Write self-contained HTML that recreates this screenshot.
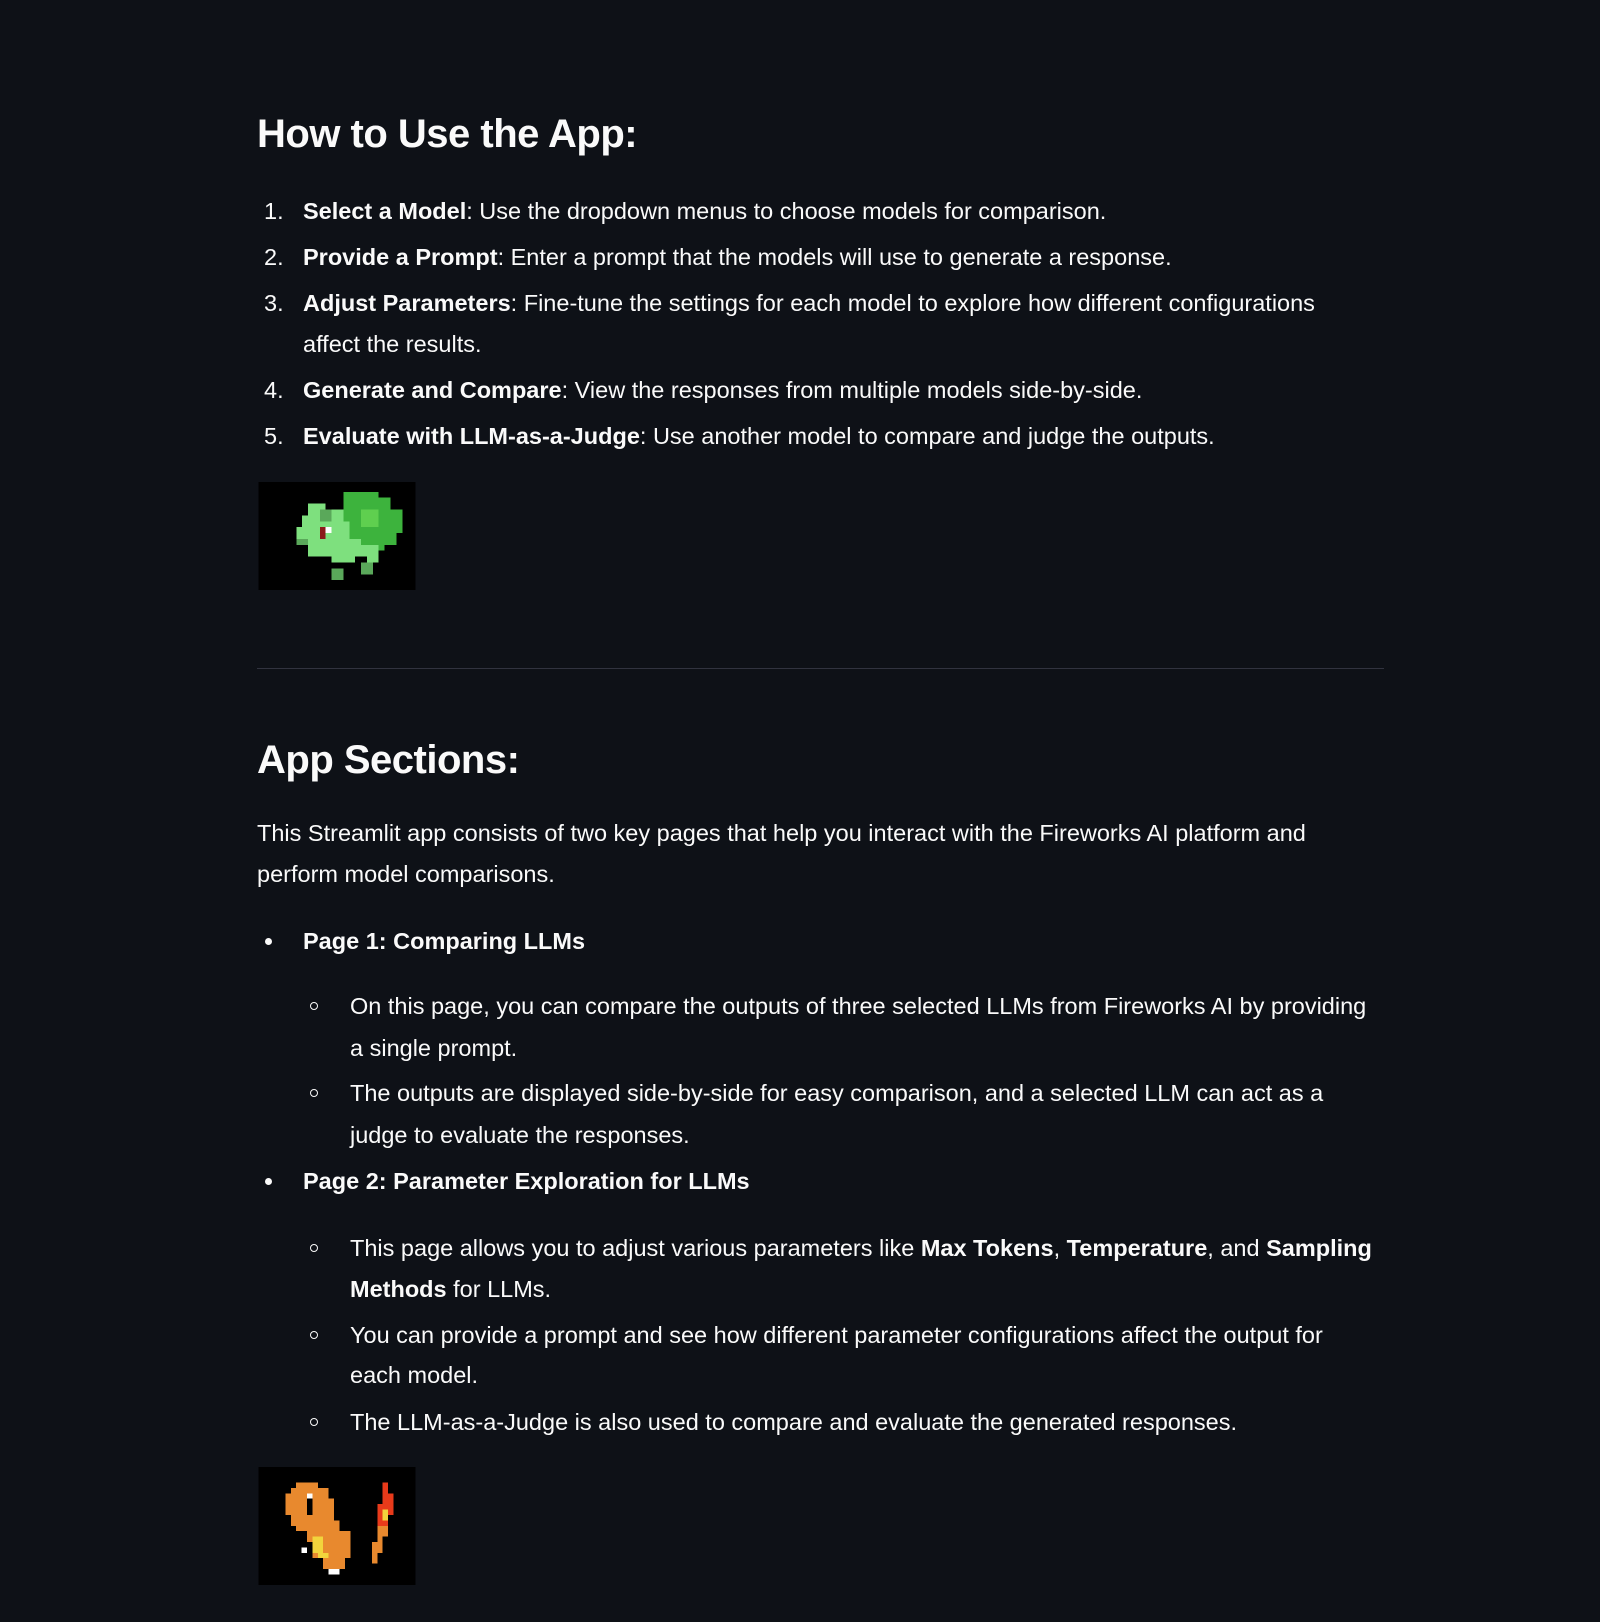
<!DOCTYPE html>
<html><head><meta charset="utf-8"><style>
html,body{margin:0;padding:0;background:#0e1117;}
body{width:1600px;height:1622px;position:relative;overflow:hidden;font-family:"Liberation Sans",sans-serif;color:#fafafa;}
.l{position:absolute;white-space:nowrap;font-size:23.5px;line-height:32px;}
.h{position:absolute;white-space:nowrap;font-size:40px;line-height:48px;font-weight:bold;letter-spacing:-0.5px;}
b{font-weight:bold;}
.dot{position:absolute;width:7px;height:7px;border-radius:50%;background:#fafafa;}
.circ{position:absolute;width:6px;height:6px;border-radius:50%;border:1.5px solid #fafafa;}
</style></head><body>
<div class="h" style="left:257px;top:110px">How to Use the App:</div>
<div class="l" style="left:264px;top:195px">1.</div><div class="l" style="left:303px;top:195px"><b>Select a Model</b>: Use the dropdown menus to choose models for comparison.</div>
<div class="l" style="left:264px;top:241px">2.</div><div class="l" style="left:303px;top:241px"><b>Provide a Prompt</b>: Enter a prompt that the models will use to generate a response.</div>
<div class="l" style="left:264px;top:287px">3.</div><div class="l" style="left:303px;top:287px"><b>Adjust Parameters</b>: Fine-tune the settings for each model to explore how different configurations</div>
<div class="l" style="left:303px;top:328px">affect the results.</div>
<div class="l" style="left:264px;top:374px">4.</div><div class="l" style="left:303px;top:374px"><b>Generate and Compare</b>: View the responses from multiple models side-by-side.</div>
<div class="l" style="left:264px;top:420px">5.</div><div class="l" style="left:303px;top:420px"><b>Evaluate with LLM-as-a-Judge</b>: Use another model to compare and judge the outputs.</div>

<svg style="position:absolute;left:257px;top:482px" width="160" height="108" viewBox="0 0 32 22" shape-rendering="crispEdges">
<rect width="32" height="22" fill="#000"/>
<g transform="translate(18.5 11) scale(1.2) translate(-18 -12.5)">
<path fill="#3db33d" d="M17 5h6v1h2v2h2v4h-1v2h-2v1h-4v-2h-2v-3h-1z"/>
<path fill="#5fcf4f" d="M20 8h3v3h-3z"/>
<path fill="#7ee07e" d="M11 7h3v1h3v2h1v3h2v1h3v3h-2v-1h-2v1h-4v-1h-4v-2h-2v-3h1v-2h1z"/>
<path fill="#5aa85a" d="M13 8h2v2h-2zM9 13h2v1h-2zM15 18h2v2h-2zM20 17h2v2h-2z"/>
<path fill="#8b1a1a" d="M13 11h1v2h-1z"/><path fill="#fff" d="M14 11h1v1h-1z"/>
</g>
</svg>

<div style="position:absolute;left:257px;top:668px;width:1127px;height:1px;background:#31333f"></div>

<div class="h" style="left:257px;top:736px">App Sections:</div>
<div class="l" style="left:257px;top:817px">This Streamlit app consists of two key pages that help you interact with the Fireworks AI platform and</div>
<div class="l" style="left:257px;top:858px">perform model comparisons.</div>

<div class="dot" style="left:265px;top:938px"></div>
<div class="l" style="left:303px;top:925px"><b>Page 1: Comparing LLMs</b></div>
<div class="circ" style="left:310px;top:1002px"></div>
<div class="l" style="left:350px;top:990px">On this page, you can compare the outputs of three selected LLMs from Fireworks AI by providing</div>
<div class="l" style="left:350px;top:1032px">a single prompt.</div>
<div class="circ" style="left:310px;top:1089px"></div>
<div class="l" style="left:350px;top:1077px">The outputs are displayed side-by-side for easy comparison, and a selected LLM can act as a</div>
<div class="l" style="left:350px;top:1119px">judge to evaluate the responses.</div>

<div class="dot" style="left:265px;top:1178px"></div>
<div class="l" style="left:303px;top:1165px"><b>Page 2: Parameter Exploration for LLMs</b></div>
<div class="circ" style="left:310px;top:1244px"></div>
<div class="l" style="left:350px;top:1232px">This page allows you to adjust various parameters like <b>Max Tokens</b>, <b>Temperature</b>, and <b>Sampling</b></div>
<div class="l" style="left:350px;top:1273px"><b>Methods</b> for LLMs.</div>
<div class="circ" style="left:310px;top:1331px"></div>
<div class="l" style="left:350px;top:1319px">You can provide a prompt and see how different parameter configurations affect the output for</div>
<div class="l" style="left:350px;top:1359px">each model.</div>
<div class="circ" style="left:310px;top:1418px"></div>
<div class="l" style="left:350px;top:1406px">The LLM-as-a-Judge is also used to compare and evaluate the generated responses.</div>

<svg style="position:absolute;left:257px;top:1467px" width="160" height="118" viewBox="0 0 32 24" shape-rendering="crispEdges">
<rect width="32" height="24" fill="#000"/>
<g transform="translate(16.5 12.5) scale(1.1) translate(-16 -12.5)">
<path fill="#e8892e" d="M8 4h4v1h2v2h1v4h1v2h2v5h-1v2h-4v-2h-2v-3h-1v-2h-2v-1h-1v-2h-1v-4h1v-1h1z"/>
<path fill="#000" d="M10 7h1v3h-1z"/><path fill="#fff" d="M10 6h1v1h-1zM9 16h1v1h-1zM14 20h2v1h-2z"/>
<path fill="#f2d43c" d="M11 14h2v3h1v1h-2v-1h-1z"/>
<path fill="#e8892e" d="M23 12h2v2h-1v3h-1v2h-1v-4h1z"/>
<path fill="#e83a1a" d="M24 4h1v2h1v4h-1v2h-2v-4h1z"/><path fill="#f2d43c" d="M24 9h1v2h-1z"/>
</g>
</svg>
</body></html>
